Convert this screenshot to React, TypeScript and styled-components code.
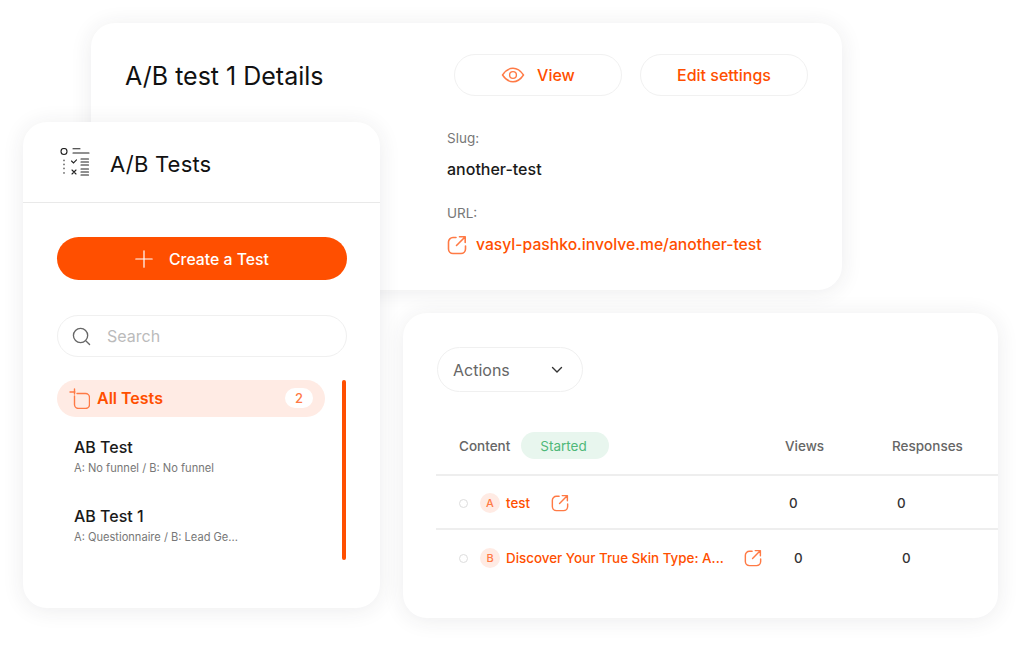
import React from "react";
import styled, { createGlobalStyle } from "styled-components";

const ORANGE = "#ff4f00";
const SOFT = "#ff7a45";

const Global = createGlobalStyle`
  html, body { margin: 0; padding: 0; background: #fff; }
  body { font-family: Inter, "Liberation Sans", sans-serif; width: 1024px; height: 645px; overflow: hidden; }
  * { box-sizing: border-box; }
`;

const Canvas = styled.div`
  position: relative;
  width: 1024px;
  height: 645px;
  background: #fff;
  overflow: hidden;
`;

const Card = styled.section<{ $x: number; $y: number; $w: number; $h: number }>`
  position: absolute;
  left: ${(p) => p.$x}px;
  top: ${(p) => p.$y}px;
  width: ${(p) => p.$w}px;
  height: ${(p) => p.$h}px;
  background: #fff;
  border-radius: 24px;
  box-shadow: 0 2px 22px rgba(40, 40, 60, 0.09);
`;

/* Details card */
const DetailsHead = styled.div`
  display: flex;
  align-items: center;
  height: 42px;
  margin: 31px 34px 0 34px;
`;
const DetailsTitle = styled.h1`
  margin: 2px 0 0;
  flex: 1;
  font-size: 25px;
  line-height: 40px;
  font-weight: 400;
  color: #111;
`;
const OutlineButton = styled.div`
  display: flex;
  align-items: center;
  justify-content: center;
  gap: 12px;
  width: 168px;
  height: 42px;
  margin-left: 18px;
  border: 1px solid #f1f1f1;
  border-radius: 21px;
  color: ${ORANGE};
  font-size: 16px;
  font-weight: 500;
`;
const DetailsBody = styled.div`
  padding: 32px 0 0 356px;
`;
const FieldLabel = styled.div`
  font-size: 13.5px;
  line-height: 20px;
  color: #777;
`;
const FieldValue = styled.div`
  margin-top: 11px;
  margin-bottom: 24px;
  font-size: 16px;
  line-height: 20px;
  font-weight: 500;
  color: #1a1a1a;
`;
const LinkValue = styled.div`
  display: flex;
  align-items: center;
  gap: 9px;
  margin-top: 12px;
  font-size: 15.7px;
  line-height: 20px;
  font-weight: 500;
  color: ${ORANGE};
`;

/* Left card */
const ListHead = styled.header`
  display: flex;
  align-items: center;
  gap: 20px;
  height: 81px;
  padding: 0 0 0 37px;
  border-bottom: 1px solid #e9e9e9;
`;
const ListTitle = styled.h2`
  margin: 3px 0 0;
  font-size: 22px;
  font-weight: 400;
  letter-spacing: 0.2px;
  color: #111;
`;
const ListBody = styled.div`
  position: relative;
  padding: 34px 33px 0 34px;
`;
const CreateButton = styled.div`
  display: flex;
  align-items: center;
  justify-content: center;
  gap: 16px;
  height: 43px;
  padding-top: 1px;
  border-radius: 22px;
  background: ${ORANGE};
  color: #fff;
  font-size: 15.8px;
  font-weight: 500;
`;
const SearchBox = styled.div`
  display: flex;
  align-items: center;
  gap: 16px;
  height: 42px;
  margin-top: 35px;
  padding-left: 14px;
  border: 1px solid #f0f0f0;
  border-radius: 21px;
  color: #bbb;
  font-size: 16px;
`;
const AllTests = styled.div`
  display: flex;
  align-items: center;
  gap: 7px;
  width: 268px;
  height: 37px;
  margin-top: 23px;
  padding: 0 12px;
  border-radius: 19px;
  background: #ffebe4;
  color: ${ORANGE};
  font-size: 16px;
  font-weight: 600;
`;
const AllLabel = styled.span`
  flex: 1;
  padding-bottom: 2px;
`;
const CountBadge = styled.span`
  display: flex;
  align-items: center;
  justify-content: center;
  width: 28px;
  height: 20px;
  margin-bottom: 2px;
  border-radius: 10px;
  background: #fff;
  font-size: 13px;
  font-weight: 500;
  color: ${SOFT};
`;
const Scrollbar = styled.div`
  position: absolute;
  left: 319px;
  top: 177px;
  width: 4px;
  height: 180px;
  border-radius: 2px;
  background: ${ORANGE};
`;
const TestItem = styled.div`
  margin-left: 17px;
  height: 69px;
  padding-top: 20px;
`;
const TestName = styled.div`
  font-size: 16px;
  line-height: 20px;
  font-weight: 500;
  color: #1a1a1a;
`;
const TestSub = styled.div`
  margin-top: 3px;
  font-size: 11.1px;
  line-height: 16px;
  color: #777;
`;

/* Table card */
const ActionsSelect = styled.div`
  display: flex;
  align-items: center;
  justify-content: space-between;
  width: 146px;
  height: 45px;
  margin: 34px 0 0 34px;
  padding: 0 19px 0 15px;
  border: 1px solid #f0f0f0;
  border-radius: 23px;
  color: #666;
  font-size: 16px;
`;
const Table = styled.div`
  margin: 27px 0 0 33px;
`;
const HeadRow = styled.div`
  display: flex;
  align-items: center;
  height: 57px;
  padding: 0 0 1px 23px;
  border-bottom: 2px solid #eee;
  font-size: 13.5px;
  font-weight: 500;
  color: #666;
`;
const ContentLabel = styled.span`
  width: 62px;
`;
const StatusPill = styled.span`
  display: flex;
  align-items: center;
  justify-content: center;
  width: 88px;
  height: 27px;
  margin-bottom: 2px;
  padding: 2px 3px 0 0;
  border-radius: 14px;
  background: #e8f6ee;
  color: #4fb878;
  font-weight: 400;
`;
const ViewsHead = styled.span`
  margin-left: 176px;
  width: 107px;
`;
const Row = styled.div<{ $last?: boolean }>`
  display: flex;
  align-items: center;
  height: 54px;
  padding-left: 23px;
  padding-top: 2px;
  border-bottom: ${(p) => (p.$last ? "none" : "2px solid #eee")};
  font-size: 13.4px;
  font-weight: 500;
`;
const RowDot = styled.span`
  width: 9px;
  height: 9px;
  border: 1px solid #ddd;
  border-radius: 50%;
  margin-right: 12px;
`;
const Letter = styled.span`
  display: flex;
  align-items: center;
  justify-content: center;
  width: 20px;
  height: 20px;
  border-radius: 50%;
  background: #ffebe4;
  color: ${SOFT};
  font-size: 11px;
  font-weight: 500;
  margin-right: 6px;
`;
const RowName = styled.span<{ $w: number }>`
  width: ${(p) => p.$w}px;
  color: ${ORANGE};
  white-space: nowrap;
`;
const Num = styled.span<{ $w: number }>`
  width: ${(p) => p.$w}px;
  color: #333;
`;
const IconSlot = styled.span<{ $w: number }>`
  display: flex;
  width: ${(p) => p.$w}px;
`;

const ExternalIcon = ({ size = 20 }: { size?: number }) => (
  <svg width={size} height={size} viewBox="0 0 20 20" fill="none" stroke={SOFT} strokeWidth="1.6" strokeLinecap="round" strokeLinejoin="round">
    <path d="M9 2.500H6a4.500 4.500 0 0 0-4.500 4.500v7A4.500 4.500 0 0 0 6 18.500h8a4.500 4.500 0 0 0 4.500-4.500v-3" />
    <path d="M9.500 10.500 18 2M12.500 1.800H18.200V7.500" />
  </svg>
);

const App = () => (
  <Canvas>
    <Global />
    <Card $x={91} $y={23} $w={751} $h={267}>
      <DetailsHead>
        <DetailsTitle>A/B test 1 Details</DetailsTitle>
        <OutlineButton>
          <svg width="24" height="16" viewBox="0 0 24 16" fill="none" stroke={SOFT} strokeWidth="1.400">
            <path d="M1.500 8C4.500 3.500 8 1.200 12 1.200S19.500 3.500 22.500 8C19.500 12.500 16 14.800 12 14.800S4.500 12.500 1.500 8Z" />
            <circle cx="12" cy="8" r="3.400" />
          </svg>
          View
        </OutlineButton>
        <OutlineButton>Edit settings</OutlineButton>
      </DetailsHead>
      <DetailsBody>
        <FieldLabel>Slug:</FieldLabel>
        <FieldValue>another-test</FieldValue>
        <FieldLabel>URL:</FieldLabel>
        <LinkValue>
          <ExternalIcon />
          vasyl-pashko.involve.me/another-test
        </LinkValue>
      </DetailsBody>
    </Card>

    <Card $x={403} $y={313} $w={595} $h={305}>
      <ActionsSelect>
        Actions
        <svg width="12" height="8" viewBox="0 0 12 8" fill="none" stroke="#333" strokeWidth="1.400" strokeLinecap="round" strokeLinejoin="round">
          <path d="M1.500 1.500 6 6l4.500-4.500" />
        </svg>
      </ActionsSelect>
      <Table>
        <HeadRow>
          <ContentLabel>Content</ContentLabel>
          <StatusPill>Started</StatusPill>
          <ViewsHead>Views</ViewsHead>
          <span>Responses</span>
        </HeadRow>
        <Row>
          <RowDot />
          <Letter>A</Letter>
          <RowName $w={45}>test</RowName>
          <IconSlot $w={238}>
            <ExternalIcon size={18} />
          </IconSlot>
          <Num $w={108}>0</Num>
          <Num $w={20}>0</Num>
        </Row>
        <Row $last>
          <RowDot />
          <Letter>B</Letter>
          <RowName $w={238}>Discover Your True Skin Type: A...</RowName>
          <IconSlot $w={50}>
            <ExternalIcon size={18} />
          </IconSlot>
          <Num $w={108}>0</Num>
          <Num $w={20}>0</Num>
        </Row>
      </Table>
    </Card>

    <Card $x={23} $y={122} $w={357} $h={486}>
      <ListHead>
        <svg width="30" height="28" viewBox="0 0 30 28" fill="none" stroke="#222" strokeWidth="1.100" strokeLinecap="round">
          <circle cx="4" cy="3.500" r="3" />
          <path d="M13 .8h7M13 5h16M4 12v.8M4 16v.8M4 20v.8M4 24.500v.8" />
          <path d="M11.500 13l2 2 3-3.200M21 11h7.500M21 14h7.500M21 17h7.500" />
          <path d="M12 22l4 4M16 22l-4 4M21 21h7.500M21 24h7.500M21 27h7.500" />
        </svg>
        <ListTitle>A/B Tests</ListTitle>
      </ListHead>
      <ListBody>
        <CreateButton>
          <svg width="18" height="18" viewBox="0 0 18 18" stroke="#fff" strokeWidth="1.200" strokeLinecap="round">
            <path d="M9 .8v16.400M.8 9h16.400" />
          </svg>
          Create a Test
        </CreateButton>
        <SearchBox>
          <svg width="19" height="19" viewBox="0 0 20 20" fill="none" stroke="#666" strokeWidth="1.400" strokeLinecap="round">
            <circle cx="9" cy="9" r="7.500" />
            <path d="M15 15l3.500 3.500" />
          </svg>
          Search
        </SearchBox>
        <AllTests>
          <svg width="21" height="21" viewBox="0 0 21 21" fill="none" stroke={SOFT} strokeWidth="1.400" strokeLinecap="round" style={{ marginBottom: 1 }}>
            <path d="M8 5.500h8.500a4 4 0 0 1 4 4v7a4 4 0 0 1-4 4h-7a4 4 0 0 1-4-4V8" />
            <path d="M5.500 1v5M1 4h5" />
          </svg>
          <AllLabel>All Tests</AllLabel>
          <CountBadge>2</CountBadge>
        </AllTests>
        <Scrollbar />
        <TestItem>
          <TestName>AB Test</TestName>
          <TestSub>A: No funnel / B: No funnel</TestSub>
        </TestItem>
        <TestItem>
          <TestName>AB Test 1</TestName>
          <TestSub>A: Questionnaire / B: Lead Ge...</TestSub>
        </TestItem>
      </ListBody>
    </Card>
  </Canvas>
);

export default App;
